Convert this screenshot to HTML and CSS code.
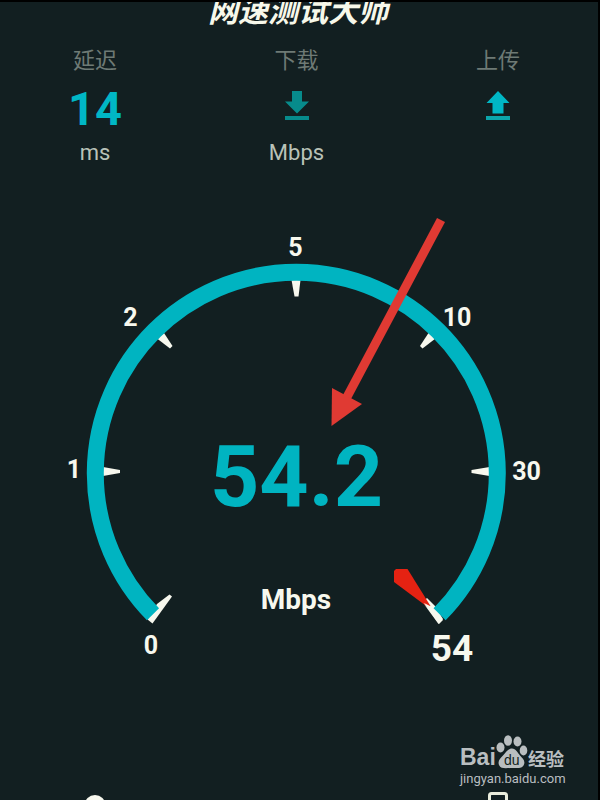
FILE: index.html
```html
<!DOCTYPE html>
<html lang="zh-CN">
  <head>
    <meta charset="UTF-8" />
    <meta name="viewport" content="width=device-width, initial-scale=1.0" />
    <title>网速测试大师</title>
    <link rel="stylesheet" href="styles.css">
  </head>
  <body>
    <div class="screen">
      <h1 class="title">网速测试大师</h1>

      <div class="stats">
        <div class="stat">
          <div class="stat-label">延迟</div>
          <div class="stat-value">14</div>
          <div class="stat-unit">ms</div>
        </div>
        <div class="stat">
          <div class="stat-label">下载</div>
          <div class="stat-value">
            <svg class="icon icon-download" viewBox="0 0 24 29">
              <path d="M7 0h10v10.500H24L12 22.500 0 10.500h7z" />
              <path d="M0 25h24v4H0z" />
            </svg>
          </div>
          <div class="stat-unit">Mbps</div>
        </div>
        <div class="stat">
          <div class="stat-label">上传</div>
          <div class="stat-value">
            <svg class="icon" viewBox="0 0 24 29">
              <path d="M12 0l11.500 12H17.500v10.500H6.500V12H.5z" />
              <path class="icon-line" d="M0 25h24v4H0z" />
            </svg>
          </div>
        </div>
      </div>

      <svg class="gauge" viewBox="0 200 600 500">
        <g class="ticks">
          <path d="M291.500 280h9l-2 16.500h-4z" />
          <path d="M157 338.500l7-5.500 8.500 13-2.500 2.500z" />
          <path d="M435.500 338.500l-7-5.500-8.500 13 2.500 2.500z" />
          <path d="M103 467v9l17-3v-3z" />
          <path d="M489.500 467v9l-18-3v-3z" />
          <path d="M157 604l12.500-9.500 2.500 2-19.500 27-5-4z" />
          <path d="M427 598l8 8 8 13-4.500 5-16-22z" />
        </g>
        <path class="arc" d="M153 614.300A201 201 0 1 1 439.600 614.300" />
        <path class="needle" d="M394 571l2-2h11.500l23 37-3 1L394 582z" />
        <path class="tick-edge" d="M424 603l15 21 4-4-13-14z" />
        <g class="labels">
          <text x="150.800" y="654">0</text>
          <text x="74" y="478">1</text>
          <text x="130.500" y="326">2</text>
          <text x="295.500" y="256">5</text>
          <text x="457" y="326">10</text>
          <text x="526.500" y="480">30</text>
          <text class="label-max" x="452" y="661">54</text>
        </g>
        <text class="speed" x="296.500" y="506">54.2</text>
        <text class="unit" x="296" y="609">Mbps</text>
        <g class="arrow">
          <path d="M437 218l8 4-94 177-8-4z" />
          <path d="M332 388l30 16-30.500 22z" />
        </g>
      </svg>

      <svg class="bottom-bar" viewBox="0 0 600 11">
        <circle class="knob" cx="95" cy="16.500" r="10.500" />
        <rect class="device" x="489.500" y="4.500" width="17" height="24" rx="2" />
      </svg>
    </div>

    <div class="watermark">
      <div class="watermark-logo">
        <span class="bai">Bai</span>
        <svg class="paw" viewBox="0 0 32 34">
          <ellipse cx="4.500" cy="12.500" rx="4" ry="5" />
          <ellipse cx="12" cy="5.500" rx="4" ry="5.300" />
          <ellipse cx="21.500" cy="6.500" rx="4" ry="5" />
          <ellipse cx="27.500" cy="15.500" rx="3.800" ry="5" />
          <path d="M16 13.500c4 0 5.500 4 8 7s5.500 5 4 9c-1.500 4.500-7 3.500-12 3.500S5 34.500 3 30c-1.500-4 1-6.500 4-9.500s5-7 9-7z" />
          <text x="15.800" y="30">du</text>
        </svg>
        <span class="jingyan">经验</span>
      </div>
      <div class="watermark-url">jingyan.baidu.com</div>
    </div>
  </body>
</html>
```

FILE: styles.css
```css
* {
  box-sizing: border-box;
}

body {
  margin: 0;
  width: 600px;
  height: 800px;
  overflow: hidden;
  position: relative;
  background-color: #121f21;
  font-family: Roboto, "Noto Sans CJK SC", sans-serif;
}

.screen {
  display: flex;
  flex-direction: column;
  height: 800px;
  overflow: hidden;
  border-top: 2px solid #000;
  border-right: 2px solid #000;
}

.title {
  flex: none;
  margin: 0;
  height: 43px;
  padding-right: 2px;
  line-height: 20px;
  font-size: 30px;
  font-style: italic;
  font-weight: bold;
  text-align: center;
  color: #f7f8ea;
}

.stats {
  flex: none;
  display: flex;
  justify-content: space-between;
  height: 155px;
  padding: 0 70px 0 65px;
}

.stat {
  display: flex;
  flex-direction: column;
  align-items: center;
  width: 60px;
}

.stat-label {
  height: 32px;
  line-height: 32px;
  font-size: 22px;
  color: #6e7a75;
}

.stat-value {
  display: flex;
  justify-content: center;
  height: 60px;
  line-height: 64px;
  font-size: 47px;
  font-weight: bold;
  color: #00b7c5;
}

.icon {
  width: 24px;
  height: 29px;
  margin-top: 14px;
  fill: #00b7c5;
}

.icon-line {
  fill: #0ca5ab;
}

.icon-download {
  fill: #078b8c;
}

.stat-unit {
  line-height: 32px;
  font-size: 22px;
  color: #b9c2b8;
}

.gauge {
  flex: none;
  width: 600px;
  height: 500px;
}

.gauge text {
  font-weight: bold;
  text-anchor: middle;
}

.arc {
  fill: none;
  stroke: #00b4c1;
  stroke-width: 17px;
}

.ticks,
.tick-edge,
.labels,
.unit {
  fill: #f7f8ee;
}

.labels {
  font-size: 25px;
}

.gauge .label-max {
  font-size: 37px;
}

.speed {
  font-size: 86px;
  fill: #00b4c1;
}

.unit {
  font-size: 28px;
}

.needle {
  fill: #e52212;
}

.arrow {
  fill: #e03a33;
}

.bottom-bar {
  flex: none;
  width: 600px;
  height: 11px;
  margin-top: 89px;
}

.knob {
  fill: #f7f8ee;
}

.device {
  fill: none;
  stroke: #e9ecdc;
  stroke-width: 3px;
}

/* watermark lies over the screen */
.watermark {
  position: absolute;
  left: 460px;
  top: 735px;
  width: 110px;
  color: #b9bec0;
}

.watermark-logo {
  display: flex;
  align-items: flex-end;
  height: 34px;
}

.bai {
  width: 36px;
  line-height: 24px;
  font-family: "Liberation Sans", Arial, sans-serif;
  font-size: 23px;
  font-weight: bold;
}

.paw {
  width: 32px;
  height: 34px;
  fill: #b9bec0;
}

.paw text {
  font-family: "Liberation Sans", Arial, sans-serif;
  font-size: 14px;
  text-anchor: middle;
  fill: #121f21;
}

.jingyan {
  line-height: 18px;
  font-size: 18px;
  font-weight: bold;
  white-space: nowrap;
}

.watermark-url {
  line-height: 19px;
  font-size: 13px;
}
```
